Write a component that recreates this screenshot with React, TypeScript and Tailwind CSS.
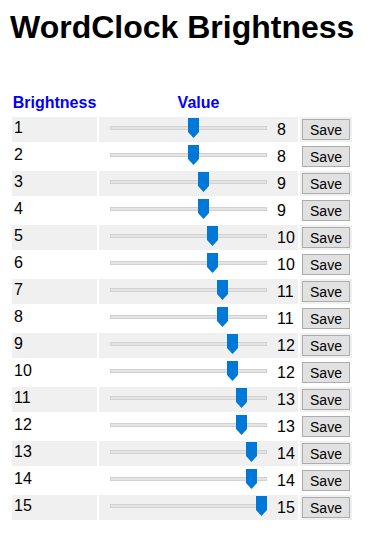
import React from 'react';

const rows = [
  { level: 1, value: 8 },
  { level: 2, value: 8 },
  { level: 3, value: 9 },
  { level: 4, value: 9 },
  { level: 5, value: 10 },
  { level: 6, value: 10 },
  { level: 7, value: 11 },
  { level: 8, value: 11 },
  { level: 9, value: 12 },
  { level: 10, value: 12 },
  { level: 11, value: 13 },
  { level: 12, value: 13 },
  { level: 13, value: 14 },
  { level: 14, value: 14 },
  { level: 15, value: 15 },
];

function Slider({ value }: { value: number }) {
  // track 157px, thumb 11px, range 0..15
  const left = (value / 15) * 145;
  return (
    <div className="w-[157px] pt-[9px]">
      <div className="relative h-[4px] bg-[#e4e4e4] border border-[#d2d2d2]">
        <svg
          className="absolute top-[-9px]"
          style={{ left: left - 0.5 }}
          width="11"
          height="20"
          viewBox="0 0 11 20"
        >
          <polygon points="0,0 11,0 11,14 5.5,20 0,14" fill="#0078d7" />
        </svg>
      </div>
    </div>
  );
}

export default function App() {
  return (
    <div className="bg-white min-h-[537px] text-black font-['Liberation_Sans',Arial,sans-serif]">
      {/* Title */}
      <h1 className="pt-[9px] pl-[10px] text-[32px] leading-[37px] font-bold">WordClock Brightness</h1>

      {/* Table */}
      <div className="mt-[47px] ml-[12px] grid grid-cols-[85px_199px_52px] gap-[2px]">
        <div className="h-[22px] text-center text-[16px] leading-[20px] font-bold text-[#0000ff]">Brightness</div>
        <div className="h-[22px] text-center text-[16px] leading-[20px] font-bold text-[#0000ff]">Value</div>
        <div className="h-[22px]" />

        {rows.map((r, i) => {
          const bg = i % 2 === 0 ? 'bg-[#f0f0f0]' : 'bg-white';
          return (
            <React.Fragment key={r.level}>
              <div className={`h-[25px] pl-[2px] pt-[2px] text-[16px] leading-[18px] ${bg}`}>{r.level}</div>
              <div className={`h-[25px] flex items-start pl-[11px] ${bg}`}>
                <Slider value={r.value} />
                <span className="ml-[10px] mt-[4px] text-[16px] leading-[18px]">{r.value}</span>
              </div>
              <div className={`h-[25px] flex items-center justify-center ${bg}`}>
                <button className="w-[48px] h-[21px] flex items-center justify-center bg-[#e1e1e1] border border-[#adadad] text-[14px] leading-[16px] text-black">
                  Save
                </button>
              </div>
            </React.Fragment>
          );
        })}
      </div>
    </div>
  );
}
